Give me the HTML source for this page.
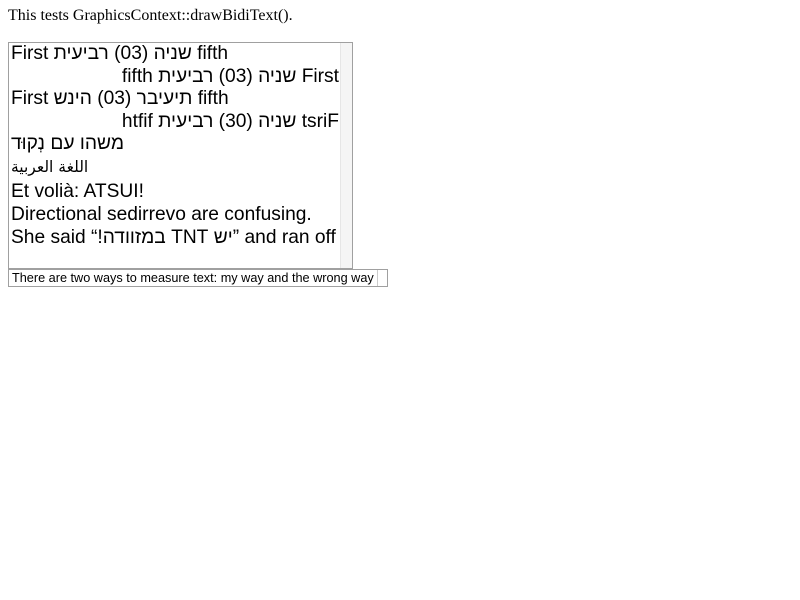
<!DOCTYPE html>
<html><head><meta charset="utf-8"><style>
html,body{margin:0;padding:0;background:#fff;width:800px;height:600px;overflow:hidden}
body{font-family:"Liberation Serif",serif;font-size:16px;color:#000;position:relative}
.p{position:absolute;left:8px;top:7px;font-size:16px}
.lb{position:absolute;left:8px;top:42px;width:343px;height:225px;border:1px solid #a0a0a0;font-family:"Liberation Sans","DejaVu Sans",sans-serif;font-size:19.2px;overflow:hidden}
.sb{position:absolute;right:0;top:0;width:11px;height:100%;background:#f5f5f5;border-left:1px solid #e6e6e6}
.r{position:absolute;left:2px;width:328px;height:22px;line-height:22px;white-space:nowrap}
.rt{text-align:right}
.sel{position:absolute;left:8px;top:269px;width:375px;height:16px;border:1px solid #a0a0a0;font-family:"Liberation Sans",sans-serif;font-size:12.7px;line-height:16px;padding-left:3px;box-sizing:content-box;white-space:nowrap;overflow:hidden}
.sel2{position:absolute;left:377px;top:270px;width:1px;height:16px;background:#ccc}
</style></head><body>
<div class="p">This tests GraphicsContext::drawBidiText().</div>
<div class="lb">
<div class="sb"></div>
<div class="r" style="top:0px">First שניה (03) רביעית fifth</div>
<div class="r rt" style="top:23px" dir="rtl">First שניה (03) רביעית fifth</div>
<div class="r" style="top:45px"><bdo dir="ltr">First שניה (03) רביעית fifth</bdo></div>
<div class="r rt" style="top:68px"><bdo dir="rtl">First שניה (03) רביעית fifth</bdo></div>
<div class="r" style="top:90px;font-family:'Liberation Sans','DejaVu Sans','Noto Sans CJK JP',sans-serif" dir="ltr"><span dir="rtl">משהו עם נְקוּד</span></div>
<div class="r" style="top:113px;font-size:15.5px;font-family:'DejaVu Sans',sans-serif">‏اللغة العربية</div>
<div class="r" style="top:138px">Et volià: ATSUI!</div>
<div class="r" style="top:161px">Directional <bdo dir="rtl">overrides</bdo> are confusing.</div>
<div class="r" style="top:184px">She said “<span dir="rtl">יש TNT במזוודה!</span>” and ran off</div>
</div>
<div class="sel">There are two ways to measure text: my way and the wrong way</div>
<div class="sel2"></div>
</body></html>
